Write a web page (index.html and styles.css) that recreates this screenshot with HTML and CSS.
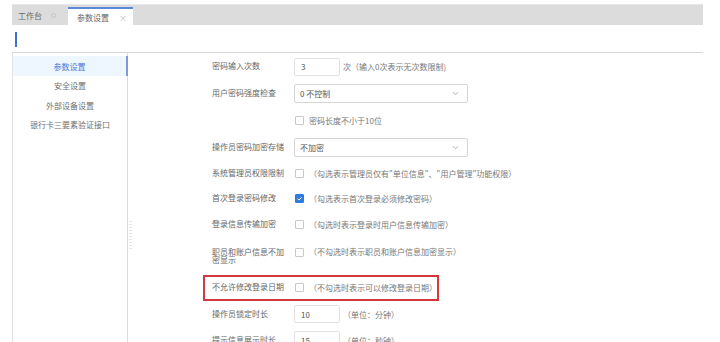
FILE: index.html
```html
<!DOCTYPE html>
<html lang="zh">
<head>
<meta charset="utf-8">
<link rel="stylesheet" href="styles.css">
</head>
<body>
<div class="tabbar">
  <div class="tab">工作台<span class="tab-dot"></span></div>
  <div class="tab active">参数设置<span class="tab-close">×</span></div>
</div>
<div class="toolbar"><span class="toolbar-mark"></span></div>
<div class="main">
  <div class="side">
    <div class="side-item active">参数设置</div>
    <div class="side-item">安全设置</div>
    <div class="side-item">外部设备设置</div>
    <div class="side-item">银行卡三要素验证接口</div>
  </div>
  <div class="splitter"><span class="grip"></span></div>
  <div class="form">
    <div class="row r1">
      <div class="label">密码输入次数</div>
      <div class="input">3</div>
      <div class="hint">次（输入0次表示无次数限制)</div>
    </div>
    <div class="row r2">
      <div class="label">用户密码强度检查</div>
      <div class="select">0 不控制<svg class="chev" viewBox="0 0 8 5" width="7" height="5"><path d="M1 1l3 3 3-3" fill="none" stroke="#aaa" stroke-width="1"/></svg></div>
    </div>
    <div class="row r3">
      <div class="label"></div>
      <span class="check"></span>
      <div class="hint">密码长度不小于10位</div>
    </div>
    <div class="row r4">
      <div class="label">操作员密码加密存储</div>
      <div class="select">不加密<svg class="chev" viewBox="0 0 8 5" width="7" height="5"><path d="M1 1l3 3 3-3" fill="none" stroke="#aaa" stroke-width="1"/></svg></div>
    </div>
    <div class="row r5">
      <div class="label">系统管理员权限限制</div>
      <span class="check"></span>
      <div class="hint">（勾选表示管理员仅有"单位信息"、"用户管理"功能权限）</div>
    </div>
    <div class="row r6">
      <div class="label">首次登录密码修改</div>
      <span class="check on"><svg viewBox="0 0 10 10" width="9" height="9"><path d="M2.2 5.2l2 2 3.8-4" fill="none" stroke="#fff" stroke-width="1.4"/></svg></span>
      <div class="hint">（勾选表示首次登录必须修改密码）</div>
    </div>
    <div class="row r7">
      <div class="label">登录信息传输加密</div>
      <span class="check"></span>
      <div class="hint">（勾选时表示登录时用户信息传输加密）</div>
    </div>
    <div class="row r8">
      <div class="label wrap">职员和账户信息不加密显示</div>
      <span class="check"></span>
      <div class="hint">（不勾选时表示职员和账户信息加密显示）</div>
    </div>
    <div class="row r9">
      <div class="mark">
        <div class="label">不允许修改登录日期</div>
        <span class="check"></span>
        <div class="hint">（不勾选时表示可以修改登录日期）</div>
      </div>
    </div>
    <div class="row r10">
      <div class="label">操作员锁定时长</div>
      <div class="input">10</div>
      <div class="hint">（单位：分钟）</div>
    </div>
    <div class="row r11">
      <div class="label">提示信息展示时长</div>
      <div class="input">15</div>
      <div class="hint">（单位：秒钟）</div>
    </div>
  </div>
</div>
</body>
</html>
```
FILE: styles.css
```css
* { box-sizing: border-box; }
html, body { margin: 0; padding: 0; background: #fff; }
body {
  width: 720px;
  height: 342px;
  overflow: hidden;
  font-family: "Noto Sans CJK SC", "Noto Sans", sans-serif;
  font-size: 8px;
  color: #666;
}
.tabbar {
  margin: 4px 0 0 12px;
  width: 691px;
  height: 21px;
  background: #dcdcdc;
  display: flex;
  align-items: flex-end;
  border-top: 1px solid #e8e8e8;
}
.tab {
  height: 20px;
  display: flex;
  align-items: center;
  padding: 0 6px;
  color: #6a6a6a;
  width: 56px;
  white-space: nowrap;
  flex: none;
}
.tab-dot {
  width: 5px;
  height: 5px;
  border-radius: 50%;
  border: 1px solid #c4c4c4;
  margin-left: 9px;
}
.tab.active {
  height: 18px;
  width: 65px;
  background: #fff;
  border-top: 2px solid #5a88da;
  padding-left: 9px;
  color: #666;
}
.tab-close {
  margin-left: 10px;
  color: #bbb;
  font-size: 8px;
}
.toolbar {
  margin-left: 12px;
  width: 691px;
  height: 28px;
  border-bottom: 1px solid #d6d6d6;
  padding: 7px 0 0 3px;
}
.toolbar-mark {
  display: block;
  width: 2px;
  height: 15px;
  background: #3f6fd1;
}
.main {
  margin-left: 12px;
  width: 691px;
  height: 290px;
  display: flex;
}
.side {
  width: 116px;
  border-left: 1px solid #e2e2e2;
  border-right: 1px solid #dcdcdc;
  padding-top: 3px;
}
.side-item {
  height: 19.5px;
  display: flex;
  align-items: center;
  justify-content: center;
  color: #707070;
  white-space: nowrap;
}
.side-item.active {
  background: #eef6ff;
  color: #4a7bd6;
  height: 20px;
  margin-right: -1px;
  border-right: 2px solid #8398d6;
}
.splitter {
  width: 8px;
  position: relative;
}
.grip {
  position: absolute;
  left: 1px;
  top: 168px;
  width: 3px;
  height: 28px;
  background: repeating-linear-gradient(#e6e6e6 0 1px, #fff 1px 3px);
}
.form {
  flex: 1;
  padding-left: 76px;
}
.row {
  display: flex;
  align-items: center;
  height: 26px;
  white-space: nowrap;
}
.r1 { height: 27px; }
.r2 { height: 27px; }
.r3 { height: 27px; }
.r4 { height: 27px; }
.r5 { height: 25px; }
.r6 { height: 25px; }
.r7 { height: 26px; }
.r8 { height: 38px; align-items: flex-start; padding-top: 11px; }
.r8 .label, .r8 .hint { margin-top: -0.5px; }
.r8 .check { margin-top: 0; }
.r8 .hint { line-height: 8.5px; }
.r9 { height: 25px; }
.r10 { height: 28px; }
.r11 { height: 24px; }
.label {
  width: 78px;
  margin-right: 4px;
  flex: none;
  color: #666;
  line-height: 8.5px;
}
.label.wrap { white-space: normal; }
.input {
  width: 46px;
  height: 18px;
  border: 1px solid #e2e2e2;
  border-radius: 2px;
  padding-left: 6px;
  display: flex;
  align-items: center;
  color: #555;
}
.hint {
  margin-left: 3px;
  color: #777;
}
.select {
  width: 174px;
  height: 19px;
  border: 1px solid #d6d6d6;
  border-radius: 2px;
  padding: 0 8px 0 5px;
  display: flex;
  align-items: center;
  justify-content: space-between;
  color: #555;
}
.check {
  width: 9px;
  height: 9px;
  border: 1px solid #c8c8c8;
  border-radius: 1px;
  margin-left: 1px;
  margin-right: 3px;
  flex: none;
  display: flex;
  align-items: center;
  justify-content: center;
}
.check.on {
  background: #2f7be0;
  border-color: #2f7be0;
}
.check + .hint { margin-left: 2px; }
.mark {
  display: flex;
  align-items: center;
  height: 26px;
  margin-left: -9px;
  padding: 0 0 0 7px;
  border: 2px solid #d2393f;
}
```
